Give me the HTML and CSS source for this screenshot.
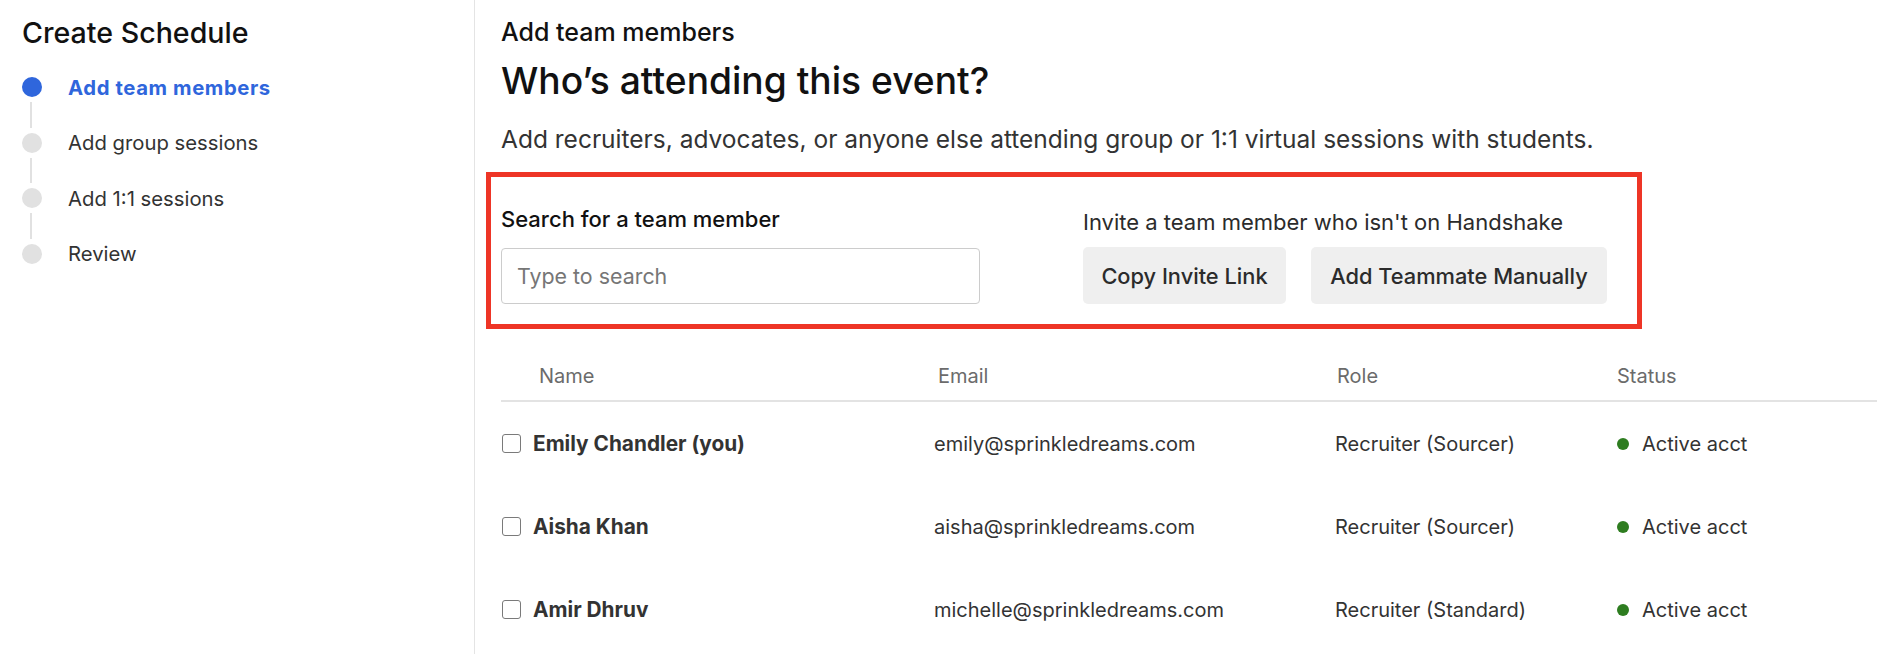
FILE: index.html
```html
<!DOCTYPE html>
<html lang="en">
<head>
    <meta charset="UTF-8">
    <meta name="viewport" content="width=device-width, initial-scale=1.0">
    <title>Create Schedule</title>
    <link rel="stylesheet" href="styles.css">
</head>
<body>

<div class="page">
    <aside class="sidebar">
        <h2 class="sidebar-title">Create Schedule</h2>
        <ol class="steps">
            <li class="step active"><span class="dot"></span>Add team members</li>
            <li class="step-line"></li>
            <li class="step"><span class="dot"></span>Add group sessions</li>
            <li class="step-line"></li>
            <li class="step"><span class="dot"></span>Add 1:1 sessions</li>
            <li class="step-line"></li>
            <li class="step"><span class="dot"></span>Review</li>
        </ol>
    </aside>

    <main class="content">
        <div class="eyebrow">Add team members</div>
        <h1 class="title">Who’s attending this event?</h1>
        <p class="lead">Add recruiters, advocates, or anyone else attending group or 1:1 virtual sessions with students.</p>

        <div class="finder">
            <div class="search">
                <label for="member-search" class="search-label">Search for a team member</label>
                <input type="text" id="member-search" placeholder="Type to search">
            </div>
            <div class="invite">
                <div class="invite-label">Invite a team member who isn't on Handshake</div>
                <div class="invite-buttons">
                    <button class="btn copy">Copy Invite Link</button>
                    <button class="btn manual">Add Teammate Manually</button>
                </div>
            </div>
        </div>

        <table class="members">
            <colgroup>
                <col class="col-name">
                <col class="col-email">
                <col class="col-role">
                <col class="col-status">
            </colgroup>
            <thead>
                <tr>
                    <th class="th-name">Name</th>
                    <th class="th-email">Email</th>
                    <th class="th-role">Role</th>
                    <th class="th-status">Status</th>
                </tr>
            </thead>
            <tbody>
                <tr>
                    <td><label class="member"><input type="checkbox"><span>Emily Chandler (you)</span></label></td>
                    <td>emily@sprinkledreams.com</td>
                    <td>Recruiter (Sourcer)</td>
                    <td><span class="status"><span class="status-dot"></span>Active acct</span></td>
                </tr>
                <tr>
                    <td><label class="member"><input type="checkbox"><span>Aisha Khan</span></label></td>
                    <td>aisha@sprinkledreams.com</td>
                    <td>Recruiter (Sourcer)</td>
                    <td><span class="status"><span class="status-dot"></span>Active acct</span></td>
                </tr>
                <tr>
                    <td><label class="member"><input type="checkbox"><span>Amir Dhruv</span></label></td>
                    <td>michelle@sprinkledreams.com</td>
                    <td>Recruiter (Standard)</td>
                    <td><span class="status"><span class="status-dot"></span>Active acct</span></td>
                </tr>
            </tbody>
        </table>
    </main>
</div>

</body>
</html>
```

FILE: styles.css
```css
body {
    font-family: Inter, "Noto Sans", sans-serif;
    background-color: #ffffff;
    color: #111111;
    margin: 0;
    box-sizing: border-box;
}

.page {
    display: flex;
    min-height: 654px;
}

.sidebar {
    width: 475px;
    flex-shrink: 0;
    box-sizing: border-box;
    border-right: 1px solid #e4e4e4;
    padding: 15px 22px;
}

.sidebar-title {
    margin: 0;
    font-size: 28.6px;
    line-height: 36px;
    font-weight: 500;
    color: #111111;
}

.steps {
    list-style: none;
    margin: 26px 0 0;
    padding: 0;
}

.step {
    display: flex;
    align-items: center;
    gap: 26px;
    height: 20px;
    font-size: 20.3px;
    color: #333333;
}

.step .dot {
    width: 20px;
    height: 20px;
    border-radius: 50%;
    background-color: #e1e1e1;
    flex-shrink: 0;
}

.step.active {
    color: #2f66dc;
    font-weight: 700;
    letter-spacing: 0.6px;
}

.step.active .dot {
    background-color: #2f66dc;
}

.step-line {
    width: 2px;
    height: 25.5px;
    margin: 5px 0 5px 8px;
    background-color: #e1e1e1;
}

.content {
    flex: 1;
    padding: 16px 17px 0 26px;
}

.eyebrow {
    font-size: 25px;
    line-height: 32px;
    font-weight: 500;
}

.title {
    margin: 11px 0 0;
    font-size: 37.2px;
    line-height: 44px;
    font-weight: 500;
}

.lead {
    margin: 21px 0 0;
    font-size: 24.5px;
    line-height: 30px;
    color: #333333;
}

.finder {
    display: flex;
    align-items: flex-end;
    gap: 103px;
    width: fit-content;
    margin: 18px 0 0 -15px;
    padding: 29px 30px 20px 10px;
    border: 5px solid #ee3526;
}

.search {
    display: flex;
    flex-direction: column;
    gap: 16px;
}

.search-label {
    font-size: 22px;
    line-height: 26px;
    font-weight: 500;
}

#member-search {
    width: 479px;
    height: 56px;
    box-sizing: border-box;
    padding: 0 15px;
    border: 1px solid #cccccc;
    border-radius: 4px;
    font-family: inherit;
    font-size: 21.4px;
    color: #333333;
}

#member-search::placeholder {
    color: #767676;
}

.invite {
    display: flex;
    flex-direction: column;
    gap: 12px;
}

.invite-label {
    font-size: 22px;
    line-height: 26px;
    color: #2b2b2b;
}

.invite-buttons {
    display: flex;
    gap: 25px;
}

.btn {
    height: 57px;
    padding: 0 10px;
    border: none;
    border-radius: 5px;
    background-color: #efefef;
    color: #2b2b2b;
    font-family: inherit;
    font-size: 21.8px;
    font-weight: 500;
    cursor: pointer;
}

.btn.copy {
    width: 203px;
}

.btn.manual {
    width: 296px;
}

.members {
    width: 100%;
    margin-top: 17px;
    border-collapse: collapse;
    table-layout: fixed;
    font-size: 20px;
    color: #333333;
}

.col-name {
    width: 433px;
}

.col-email {
    width: 401px;
}

.col-role {
    width: 281px;
}

.members th {
    height: 48px;
    padding: 6px 0 0;
    text-align: left;
    font-weight: 400;
    color: #6b6b6b;
    border-bottom: 2px solid #e3e3e3;
}

.members .th-name {
    padding-left: 38px;
}

.members .th-email {
    padding-left: 4px;
}

.members .th-role {
    padding-left: 2px;
}

.members .th-status {
    padding-left: 1px;
}

.members td {
    height: 83px;
    padding: 0;
}

.member {
    display: flex;
    align-items: center;
    gap: 12px;
    font-weight: 700;
    font-size: 20.8px;
}

.member input {
    appearance: none;
    box-sizing: border-box;
    width: 19px;
    height: 19px;
    margin: 0 0 0 1px;
    border: 1.5px solid #7a7a7a;
    border-radius: 3px;
    background-color: #ffffff;
    flex-shrink: 0;
}

.status {
    display: flex;
    align-items: center;
    gap: 13px;
}

.status-dot {
    width: 12px;
    height: 12px;
    border-radius: 50%;
    background-color: #2e7d20;
    margin-left: 1px;
}
```
